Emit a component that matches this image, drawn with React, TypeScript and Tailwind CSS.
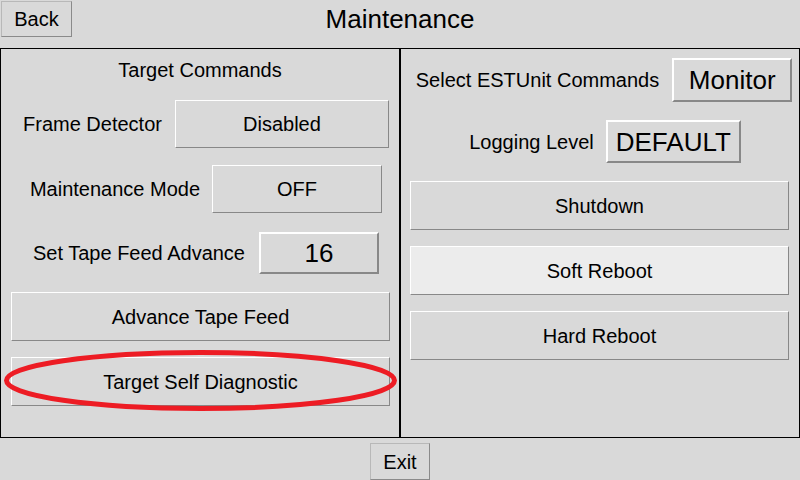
import React from 'react';

const font = { fontFamily: '"Liberation Sans", Arial, sans-serif' };

interface TkButtonProps {
  label: string;
  className?: string;
  thick?: boolean;
  active?: boolean;
  big?: boolean;
}

// Tk style raised button: light top/left edge, dark bottom/right edge
const TkButton: React.FC<TkButtonProps> = ({ label, className = '', thick, active, big }) => (
  <div
    className={`flex items-center justify-center shrink-0 text-black ${
      thick ? 'border-2' : 'border'
    } border-t-white border-l-white border-b-[#888888] border-r-[#888888] ${
      active ? 'bg-[#ececec]' : 'bg-[#d9d9d9]'
    } ${big ? 'text-[26px]' : 'text-[20px]'} leading-none ${className}`}
  >
    {label}
  </div>
);

const SmallButton: React.FC<{ label: string; className?: string }> = ({ label, className = '' }) => (
  <div
    className={`flex items-center justify-center text-[20px] leading-none text-black border border-t-[#b8b8b8] border-l-[#b8b8b8] border-b-[#8a8a8a] border-r-[#8a8a8a] bg-[#d9d9d9] ${className}`}
  >
    {label}
  </div>
);

const App: React.FC = () => {
  return (
    <div className="relative w-[800px] h-[480px] bg-[#d9d9d9] overflow-hidden flex flex-col" style={font}>
      {/* header */}
      <div className="h-[48px] grid grid-cols-[1fr_auto_1fr] items-start">
        <SmallButton label="Back" className="ml-px mt-px w-[71px] h-[36px]" />
        <div className="text-[26px] leading-none pt-[6px] text-black">Maintenance</div>
        <div />
      </div>

      {/* panels */}
      <div className="flex h-[390px]">
        <div className="w-[400px] border border-black flex flex-col">
          <div className="mt-[10px] text-center text-[20px] leading-[23px]">Target Commands</div>

          <div className="mt-[18px] flex items-center justify-center gap-[13px] pl-[12px]">
            <span className="text-[20px] leading-none">Frame Detector</span>
            <TkButton label="Disabled" className="w-[214px] h-[48px]" />
          </div>

          <div className="mt-[17px] flex items-center justify-center gap-[12px] pl-[12px]">
            <span className="text-[20px] leading-none">Maintenance Mode</span>
            <TkButton label="OFF" className="w-[170px] h-[48px]" />
          </div>

          <div className="mt-[19px] flex items-center justify-center gap-[14px] pl-[12px]">
            <span className="text-[20px] leading-none">Set Tape Feed Advance</span>
            <TkButton label="16" thick big className="w-[120px] h-[42px]" />
          </div>

          <TkButton label="Advance Tape Feed" className="mt-[18px] ml-[10px] w-[379px] h-[49px]" />
          <TkButton label="Target Self Diagnostic" className="mt-[16px] ml-[10px] w-[379px] h-[49px]" />
        </div>

        <div className="w-[400px] border border-black flex flex-col">
          <div className="mt-[9px] flex items-center justify-center gap-[13px] pl-[8px]">
            <span className="text-[20px] leading-none">Select ESTUnit Commands</span>
            <TkButton label="Monitor" thick big className="w-[120px] h-[44px]" />
          </div>

          <div className="mt-[18px] flex items-center justify-center gap-[12px] pl-[10px]">
            <span className="text-[20px] leading-none">Logging Level</span>
            <TkButton label="DEFAULT" thick big className="w-[135px] h-[43px]" />
          </div>

          <TkButton label="Shutdown" className="mt-[18px] ml-[9px] w-[379px] h-[49px]" />
          <TkButton label="Soft Reboot" active className="mt-[16px] ml-[9px] w-[379px] h-[49px]" />
          <TkButton label="Hard Reboot" className="mt-[16px] ml-[9px] w-[379px] h-[49px]" />
        </div>
      </div>

      {/* footer */}
      <div className="flex justify-center pt-[5px]">
        <SmallButton label="Exit" className="w-[60px] h-[37px]" />
      </div>

      {/* red annotation ellipse */}
      <svg className="absolute left-0 top-0 pointer-events-none" width="800" height="480">
        <ellipse cx="200.5" cy="380.5" rx="194" ry="28" fill="none" stroke="#ed1c24" strokeWidth="5" />
      </svg>
    </div>
  );
};

export default App;
